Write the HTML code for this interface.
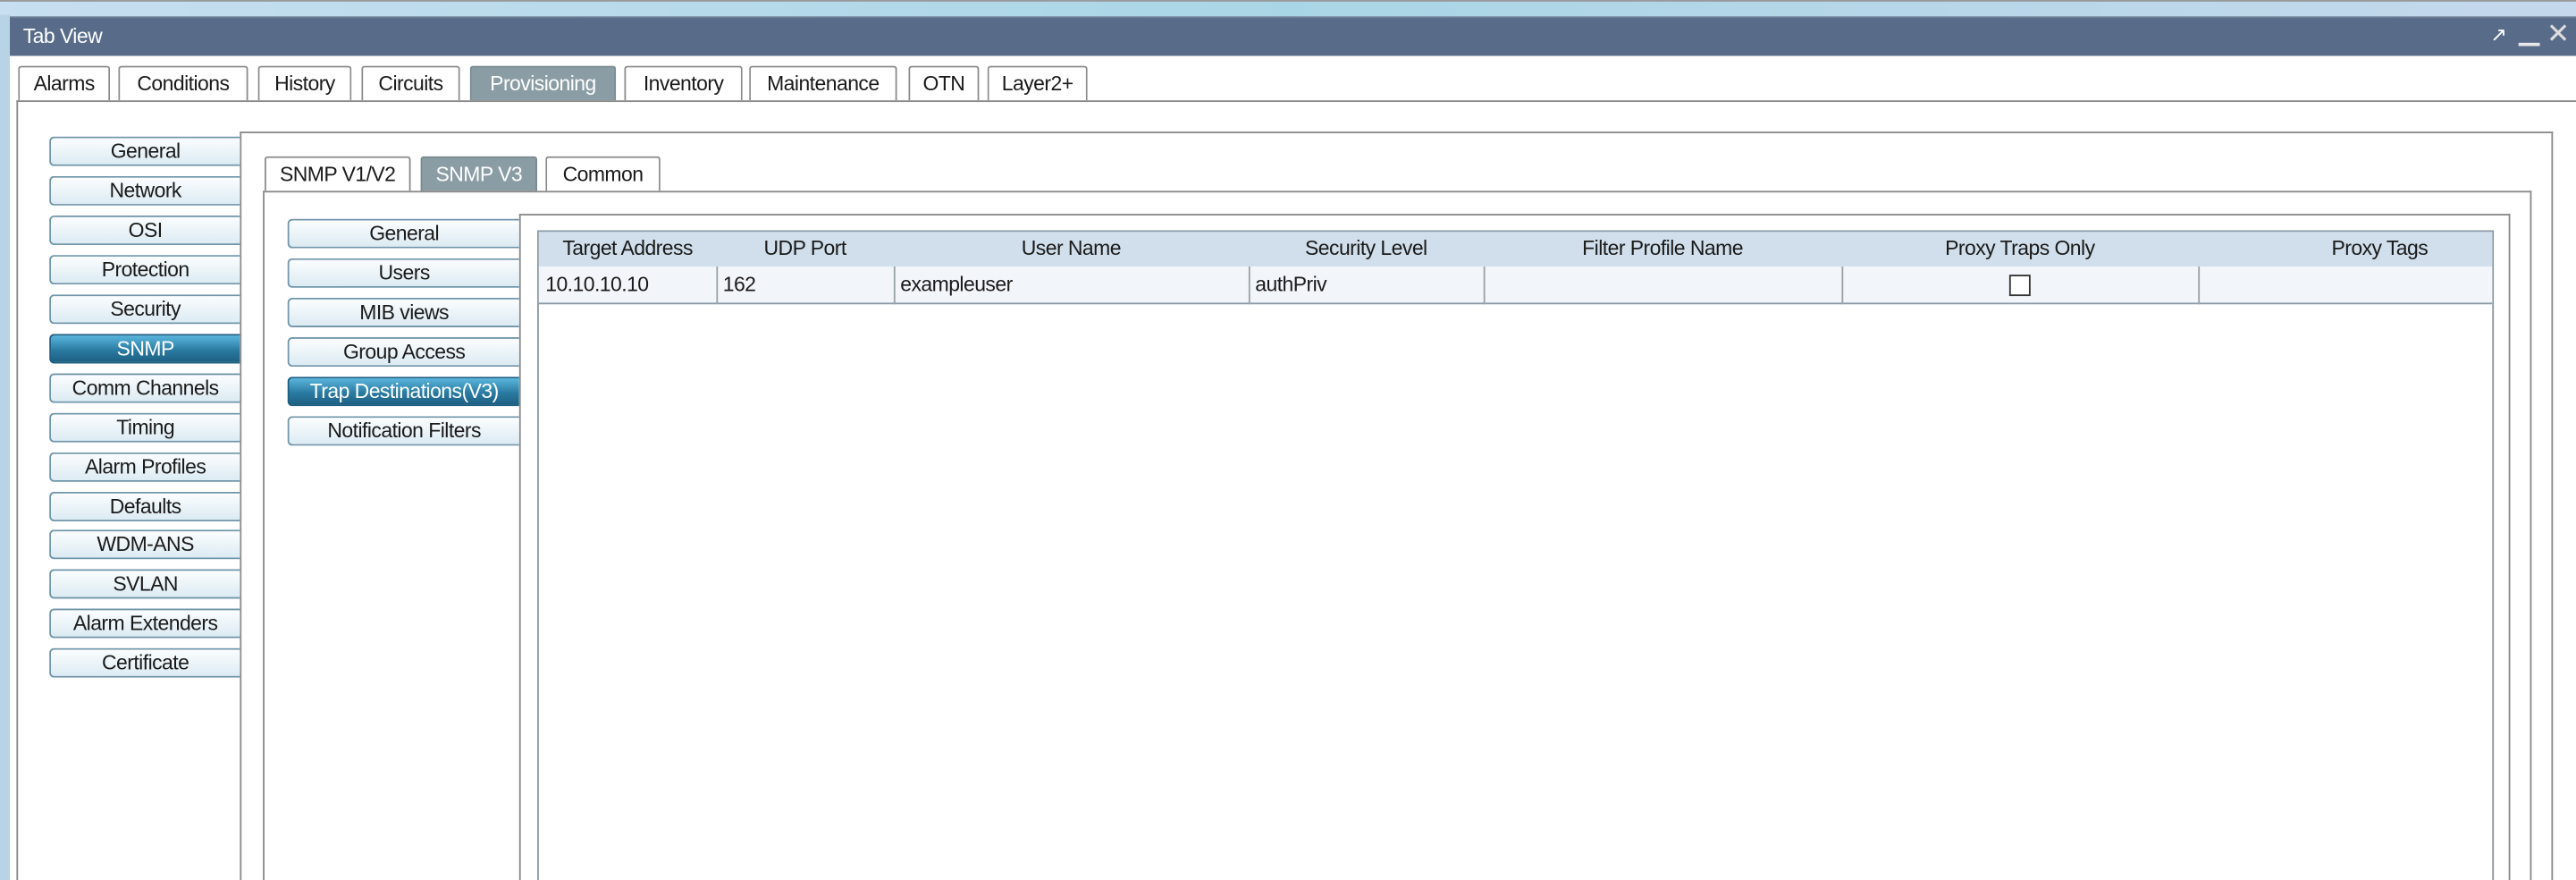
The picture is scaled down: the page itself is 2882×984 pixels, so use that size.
<!DOCTYPE html>
<html><head><meta charset="utf-8"><style>
*{box-sizing:border-box;margin:0;padding:0}
html,body{width:2882px;height:984px;overflow:hidden;background:#fff}
#s{position:absolute;left:0;top:0;width:1568px;height:535px;overflow:hidden;transform-origin:0 0;transform:scale(1.83801,1.83925);font-family:"Liberation Sans",sans-serif;font-size:12.5px;color:#1a1a1a;letter-spacing:-0.3px}
.a{position:absolute}
.nb{border-bottom:none!important}
.tab{position:absolute;top:40px;height:21px;border:1px solid #8a8a8a;border-bottom:none;border-radius:2px 2px 0 0;background:#fff;text-align:center;line-height:20px}
.tab.sel{background:#8b9da4;color:#fff;border-color:#7a8a90}
.btn{position:absolute;height:18px;border:1px solid #6f95a8;border-right:none;border-radius:3px 0 0 3px;background:linear-gradient(#fbfdfe,#dcebf3);text-align:center;line-height:17px}
.btn.sel{background:linear-gradient(#5ab5dc,#2a7ba2 55%,#1d5f82);color:#fff;border-color:#1d5d80}
.h{position:absolute;top:141px;height:21px;line-height:21px;text-align:center}
.c{position:absolute;top:162px;height:23px;line-height:23px;padding-left:4px}
.v{position:absolute;top:162px;width:1px;height:23px;background:#9aa3a8}
</style></head><body><div id="s">
<div class="a" style="left:0;top:0;width:1568px;height:10px;background:linear-gradient(90deg,#c7dff0,#a9d6e6 50%,#c5d8ec)"></div>
<div class="a" style="left:0;top:0;width:1568px;height:1px;background:#999"></div>
<div class="a" style="left:0;top:9px;width:6px;height:526px;background:#b8d2e6"></div>
<div class="a" style="left:6px;top:10px;width:1562px;height:24px;background:#586c8a;border-top:1px solid #6c7d96"></div>
<div class="a" style="left:14px;top:13px;color:#fff;line-height:18px">Tab View</div>
<div class="a" style="left:1516px;top:14px;color:#fff;font-size:12px">&#x2197;</div>
<div class="a" style="left:1533px;top:26px;width:13px;height:2px;background:#e8e8e8"></div>
<div class="a" style="left:1550px;top:12px;color:#ddd;font-size:17px;line-height:18px">&#x2715;</div>
<div class="a" style="left:6px;top:34px;width:1562px;height:501px;background:#fff"></div>
<div class="tab" style="left:11px;width:56px">Alarms</div>
<div class="tab" style="left:72px;width:79px">Conditions</div>
<div class="tab" style="left:157px;width:57px">History</div>
<div class="tab" style="left:220px;width:60px">Circuits</div>
<div class="tab sel" style="left:286px;width:89px">Provisioning</div>
<div class="tab" style="left:380px;width:72px">Inventory</div>
<div class="tab" style="left:456px;width:90px">Maintenance</div>
<div class="tab" style="left:553px;width:43px">OTN</div>
<div class="tab" style="left:601px;width:61px">Layer2+</div>
<div class="a nb" style="left:10px;top:61px;width:1558px;height:474px;border:1px solid #8a8a8a;border-right:none"></div>
<div class="a nb" style="left:146px;top:80px;width:1408px;height:455px;border:1px solid #8a8a8a"></div>
<div class="btn" style="left:30px;top:83px;width:116px">General</div>
<div class="btn" style="left:30px;top:107px;width:116px">Network</div>
<div class="btn" style="left:30px;top:131px;width:116px">OSI</div>
<div class="btn" style="left:30px;top:155px;width:116px">Protection</div>
<div class="btn" style="left:30px;top:179px;width:116px">Security</div>
<div class="btn sel" style="left:30px;top:203px;width:116px">SNMP</div>
<div class="btn" style="left:30px;top:227px;width:116px">Comm Channels</div>
<div class="btn" style="left:30px;top:251px;width:116px">Timing</div>
<div class="btn" style="left:30px;top:275px;width:116px">Alarm Profiles</div>
<div class="btn" style="left:30px;top:299px;width:116px">Defaults</div>
<div class="btn" style="left:30px;top:322px;width:116px">WDM-ANS</div>
<div class="btn" style="left:30px;top:346px;width:116px">SVLAN</div>
<div class="btn" style="left:30px;top:370px;width:116px">Alarm Extenders</div>
<div class="btn" style="left:30px;top:394px;width:116px">Certificate</div>
<div class="tab" style="left:161px;top:95px;width:89px">SNMP V1/V2</div>
<div class="tab sel" style="left:256px;top:95px;width:71px">SNMP V3</div>
<div class="tab" style="left:332px;top:95px;width:70px">Common</div>
<div class="a nb" style="left:160px;top:116px;width:1381px;height:419px;border:1px solid #8a8a8a"></div>
<div class="a nb" style="left:316px;top:130px;width:1212px;height:405px;border:1px solid #8a8a8a"></div>
<div class="btn" style="left:175px;top:133px;width:141px">General</div>
<div class="btn" style="left:175px;top:157px;width:141px">Users</div>
<div class="btn" style="left:175px;top:181px;width:141px">MIB views</div>
<div class="btn" style="left:175px;top:205px;width:141px">Group Access</div>
<div class="btn sel" style="left:175px;top:229px;width:141px">Trap Destinations(V3)</div>
<div class="btn" style="left:175px;top:253px;width:141px">Notification Filters</div>
<div class="a nb" style="left:327px;top:140px;width:1191px;height:395px;border:1px solid #8a9aa6"></div>
<div class="a" style="left:328px;top:141px;width:1189px;height:21px;background:#d0dfeb"></div>
<div class="a" style="left:328px;top:162px;width:1189px;height:23px;background:#f2f5fa;border-bottom:1px solid #8a9aa6"></div>
<div class="h" style="left:328px;width:108px">Target Address</div>
<div class="h" style="left:436px;width:108px">UDP Port</div>
<div class="h" style="left:544px;width:216px">User Name</div>
<div class="h" style="left:760px;width:143px">Security Level</div>
<div class="h" style="left:903px;width:218px">Filter Profile Name</div>
<div class="h" style="left:1121px;width:217px">Proxy Traps Only</div>
<div class="h" style="left:1380px;width:137px">Proxy Tags</div>
<div class="v" style="left:436px"></div><div class="v" style="left:544px"></div><div class="v" style="left:760px"></div><div class="v" style="left:903px"></div><div class="v" style="left:1121px"></div><div class="v" style="left:1338px"></div>
<div class="c" style="left:328px">10.10.10.10</div>
<div class="c" style="left:436px">162</div>
<div class="c" style="left:544px">exampleuser</div>
<div class="c" style="left:760px">authPriv</div>
<div class="a" style="left:1223px;top:167px;width:13px;height:13px;border:1px solid #333;background:#fff"></div>
</div></body></html>
